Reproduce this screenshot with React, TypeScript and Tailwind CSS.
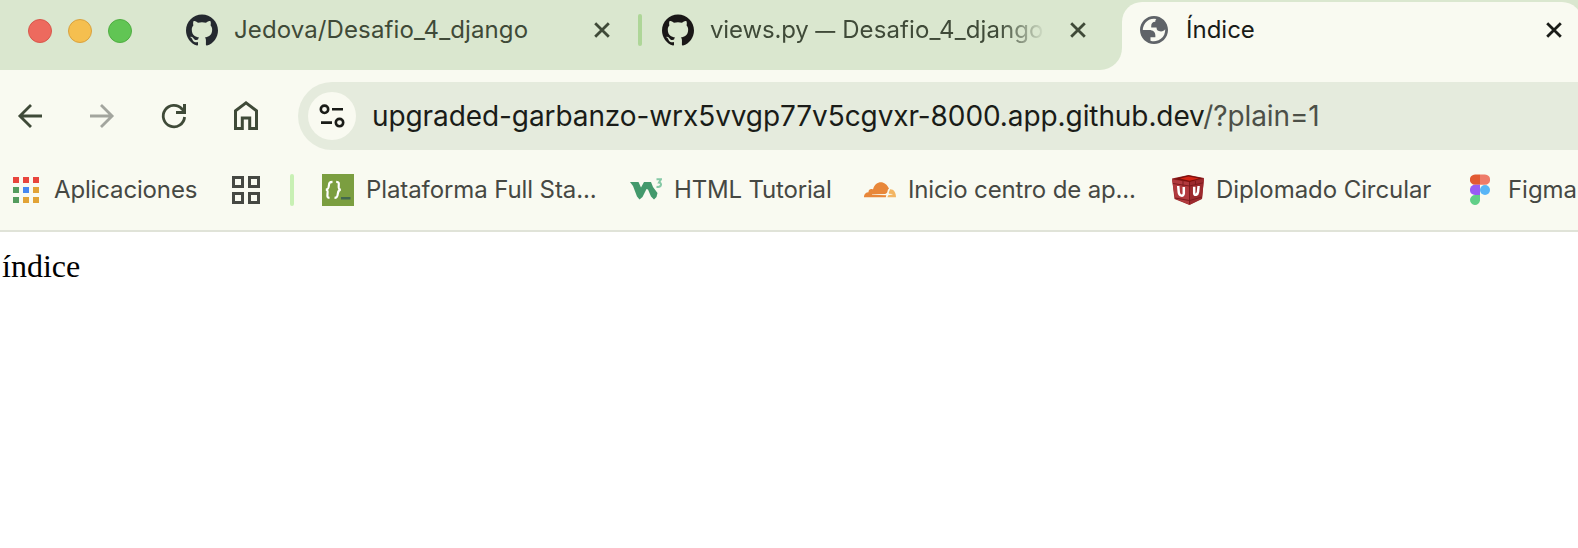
import type { ReactNode } from "react";
import { SiGithub } from "react-icons/si";

function CloseIcon({ className }: { className: string }) {
  return (
    <svg width="16" height="16" viewBox="0 0 16 16" className={className}>
      <path d="M1.2 1.2 14.8 14.8M14.8 1.2 1.2 14.8" stroke="currentColor" strokeWidth="2.8" fill="none" />
    </svg>
  );
}

function GlobeIcon() {
  return (
    <svg width="28" height="28" viewBox="2 2 20 20" className="ml-[18px] shrink-0 text-[#5f6368]">
      <path
        fill="currentColor"
        fillRule="evenodd"
        d="M12 2C6.48 2 2 6.48 2 12s4.48 10 10 10 10-4.48 10-10S17.52 2 12 2zM4 12h4.4c3.407.022 4.922 1.73 4.543 5.127H9.488v2.47a8.004 8.004 0 0 0 10.498-8.083C19.327 12.504 18.332 13 17 13c-2.137 0-3.206-.916-3.206-2.75h-3.748c-.274-2.728.683-4.092 2.87-4.092 0-.975.327-1.597.811-1.97A8.004 8.004 0 0 0 4 12z"
      />
    </svg>
  );
}

function TabStrip() {
  return (
    <div className="flex h-[70px] w-full bg-[#dae7cf] text-[24px] text-[#3f4a38]">
      <div className="flex h-[62px] w-[186px] shrink-0 items-center gap-4 pl-7">
        <span className="size-6 rounded-full border border-[#d8584c] bg-[#ed6a5e]" />
        <span className="size-6 rounded-full border border-[#d9a23f] bg-[#f5bf4f]" />
        <span className="size-6 rounded-full border border-[#50ae42] bg-[#61c554]" />
      </div>
      <div className="flex h-[60px] w-[452px] shrink-0 items-center">
        <SiGithub size={32} className="shrink-0 text-[#24292f]" />
        <span className="ml-4 w-[360px] tracking-[0.11px]">Jedova/Desafio_4_django</span>
        <CloseIcon className="shrink-0" />
      </div>
      <div className="flex h-[60px] w-[462px] shrink-0 items-center">
        <span className="h-8 w-1 shrink-0 rounded-full bg-[#aed698]" />
        <SiGithub size={32} className="ml-5 shrink-0 text-[#191717]" />
        <span className="ml-4 w-[336px] overflow-hidden whitespace-nowrap tracking-[0.1px] [mask-image:linear-gradient(to_right,black_86%,transparent_100%)]">
          <span className="tracking-[-0.15px]">views.py </span>
          <span className="text-[20px] font-medium">—</span> Desafio_4_django
        </span>
        <CloseIcon className="ml-6 shrink-0" />
      </div>
      <div className="flex h-full w-[22px] shrink-0 bg-[#f9faf1]">
        <div className="h-full w-full rounded-br-[22px] bg-[#dae7cf]" />
      </div>
      <div className="mt-[2px] flex h-[68px] w-[460px] shrink-0 items-start rounded-t-[20px] bg-[#f9faf1] text-[#1a1c18]">
        <div className="flex h-14 items-center">
          <GlobeIcon />
          <span className="ml-[18px] w-[360px]">Índice</span>
          <CloseIcon className="shrink-0" />
        </div>
      </div>
    </div>
  );
}

function Toolbar() {
  return (
    <div className="flex h-[92px] items-center text-[#3f4a38]">
      <svg width="298" height="68" viewBox="0 0 298 68" fill="none" stroke="currentColor" strokeWidth="2.8" className="shrink-0">
        <path d="M42 34H20M31 22.9 19.9 34 31 45.1" />
        <path d="M90 34h22M101 22.9 112.1 34 101 45.1" stroke="#a3a59e" />
        <path d="M184.600 35a10.700 10.700 0 1 1-2.600-8l2 2.500" />
        <path d="M184.500 22v8.500H176" strokeWidth="3" />
        <path d="M235.500 46.500V28.800L246 20.900l10.500 7.900v17.700h-6.800V36h-7.400v10.500z" strokeWidth="3" />
      </svg>
      <div className="flex h-[68px] grow items-center rounded-l-full bg-[#e5ebdd] pl-[10px]">
        <div className="flex size-12 shrink-0 items-center justify-center rounded-full bg-[#f9faf1]">
          <svg width="26" height="26" viewBox="0 0 26 26" fill="none" stroke="#1a1c18" strokeWidth="2.6">
            <circle cx="5.500" cy="6.300" r="3.700" />
            <path d="M13 6.300h11M2 19.600h11" />
            <circle cx="20.500" cy="19.600" r="3.700" />
          </svg>
        </div>
        <span className="ml-4 whitespace-nowrap text-[28px] tracking-[-0.09px] text-[#1a1c18]">
          upgraded-garbanzo-wrx5vvgp77v5cgvxr-8000.app.github.dev<span className="text-[#4d5048]">/?plain=1</span>
        </span>
      </div>
    </div>
  );
}

const appDots = ["#e8453c", "#e8453c", "#e8453c", "#549c5e", "#4688f1", "#e2a336", "#549c5e", "#e2a336", "#e2a336"];

function Bookmark({ icon, className, children }: { icon: ReactNode; className: string; children: ReactNode }) {
  return (
    <div className={`flex shrink-0 items-center whitespace-nowrap ${className}`}>
      {icon}
      <span>{children}</span>
    </div>
  );
}

function BracesIcon() {
  return (
    <svg width="32" height="32" viewBox="0 0 32 32" className="mr-3">
      <path d="M0 0h32v32H0z" fill="#7b9e40" />
      <g fill="none" stroke="#fff" strokeWidth="2.2">
        <path d="M10.500 7.800c-3 0-3.400 1-3.700 4.200-.3 2.600-.6 3.300-2.800 3.700 2 .4 1.800 1.600 1.500 4-.3 2.800-.2 4 2 4.200" />
        <path d="M14.200 7.800c2.800 0 2.800 1.200 2.500 4-.2 2.600-.1 3.500 2 3.900-2.300.4-2.600 1.600-2.900 4.200-.3 2.800-.8 4-3.300 4" />
      </g>
      <path d="M19 23h9.500v2.500H19z" fill="#43684e" />
    </svg>
  );
}

function SchoolIcon() {
  return (
    <svg width="32" height="32" viewBox="0 0 32 32" className="mr-3">
      <path d="M0 8h8.500l2.500 5.500 3-5.500h7l2 5 4.500 6-1 4-2.500 2.500-3-3-3-7-1.500-.5-4 8-3 2.500-2.500-3L3 12z" fill="#43996c" />
      <path d="M26.500 5.200h4.500l-2 3.400c3 0 3 5.300-2.500 4.200" fill="none" stroke="#86c9a6" strokeWidth="2" />
    </svg>
  );
}

function CloudIcon() {
  return (
    <svg width="32" height="32" viewBox="0 0 32 32" className="mr-3">
      <path d="M0 23.200c-.2-3 1.700-5 4.500-5-.2-2.700 2.300-4 4.500-2.800C11.500 6 21.500 5.800 25 14.800c-1.400.2-1 1.700-1.700 3.200-.4.900-1.200 1.700-2.300 1.900l-13 .4v.5l14.300.4-.5 2z" fill="#e8873a" />
      <path d="M26 15.200c3.800-.2 6 3.200 6 8h-8.600l.8-2 4.300-.6v-.5l-3.500-.3c-.8-1.800.8-3 1-4.600z" fill="#f3b562" />
    </svg>
  );
}

function CubeIcon() {
  return (
    <svg width="32" height="32" viewBox="0 0 32 32" className="mr-3">
      <path d="M0 4.500 16.500 1 32 4l-2 21-12.500 6L2.500 25z" fill="#98272a" />
      <path d="M1 5 16.500 1.300 31 4.300 17.500 8z" fill="#7c100d" />
      <path d="m8 4.600 8.500-2L27 4.400l-9.500 2.400z" fill="#d32415" />
      <path d="M0 5.500 17.500 8.200v22.500L3 24.500z" fill="#b23a3e" />
      <path d="M17.500 8.200 32 5l-2 19.500-12.500 6.200z" fill="#9c2a2e" />
      <path d="M1 9.500 17.500 12 31 8.800M11 7v5M23.500 7v4M17.500 8v22M3 24l14.500 2.500L30 23" fill="none" stroke="#7d1a1d" strokeWidth="1" />
      <path d="m6.200 12 .6 6.500c.4 3.500 4.800 4.500 5 1V13M22.200 12.700v6.500c.1 3 3.500 1.500 3.800-1.200l.6-6" fill="none" stroke="#fff" strokeWidth="2.500" />
    </svg>
  );
}

function FigmaIcon() {
  return (
    <svg width="20" height="32" viewBox="0 0 20 32" className="mr-[18px]">
      <path d="M10 .5v10.300H5A5.100 5.100 0 0 1 5 .5z" fill="#e25a32" />
      <path d="M10 .5h5a5.100 5.100 0 0 1 0 10.300h-5z" fill="#ee7b69" />
      <path d="M10 10.800v10.200H5a5.100 5.100 0 0 1 0-10.200z" fill="#985cf4" />
      <circle cx="15" cy="16" r="5" fill="#58b5f7" />
      <path d="M10 21v5.500A5 5 0 1 1 5 21z" fill="#61cf88" />
    </svg>
  );
}

function BookmarksBar() {
  return (
    <div className="flex h-[70px] items-start overflow-hidden border-b-2 border-[#e0e3d8] text-[24px] text-[#464843]">
      <div className="flex h-14 shrink-0 items-center pl-[13px]">
        <Bookmark
          className="w-[219px] tracking-[-0.15px]"
          icon={
            <svg width="26" height="26" viewBox="0 0 26 26" className="mr-[15px]">
              {appDots.map((color, i) => (
                <rect key={i} x={(i % 3) * 10} y={Math.floor(i / 3) * 10} width="6" height="6" fill={color} />
              ))}
            </svg>
          }
        >
          Aplicaciones
        </Bookmark>
        <svg width="28" height="28" viewBox="0 0 28 28" fill="none" stroke="#464843" strokeWidth="3" className="shrink-0">
          <path d="M1.500 1.500h9v9h-9zM17.500 1.500h9v9h-9zM1.500 17.500h9v9h-9zM17.500 17.500h9v9h-9z" />
        </svg>
        <span className="mx-[30px] h-8 w-1 shrink-0 rounded-full bg-[#c8f0b4]" />
        <Bookmark className="-ml-[2px] w-[308px] tracking-[-0.1px]" icon={<BracesIcon />}>Plataforma Full Sta...</Bookmark>
        <Bookmark className="w-[234px] tracking-[-0.17px]" icon={<SchoolIcon />}>HTML Tutorial</Bookmark>
        <Bookmark className="w-[308px] tracking-[-0.14px]" icon={<CloudIcon />}>Inicio centro de ap...</Bookmark>
        <Bookmark className="w-[298px] tracking-[-0.07px]" icon={<CubeIcon />}>Diplomado Circular</Bookmark>
        <Bookmark className="tracking-[-0.05px]" icon={<FigmaIcon />}>Figma</Bookmark>
      </div>
    </div>
  );
}

export default function App() {
  return (
    <div className="flex h-[548px] w-full flex-col overflow-hidden bg-white font-['Inter',sans-serif]">
      <header className="shrink-0 bg-[#f9faf1]">
        <TabStrip />
        <Toolbar />
        <BookmarksBar />
      </header>
      <main className="pt-4 pl-[2px] font-['Liberation_Serif',serif] text-[32px] leading-[37px] text-black">índice</main>
    </div>
  );
}
